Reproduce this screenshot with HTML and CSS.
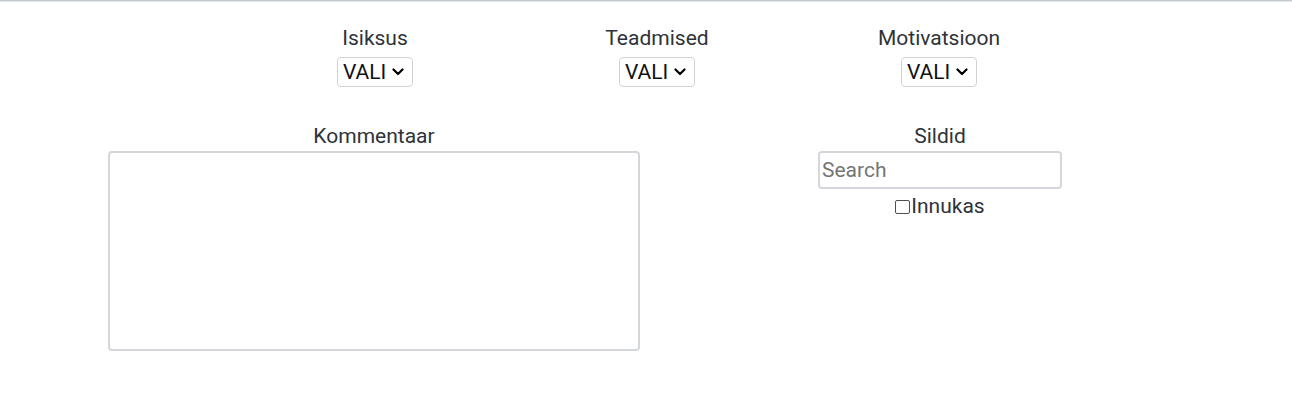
FILE: index.html
```html
<!DOCTYPE html>
<html lang="et">
<head>
<meta charset="utf-8">
<title>Hinnang</title>
<link rel="stylesheet" href="styles.css">
</head>
<body>
<div class="topline"></div>
<div class="row-selects">
  <div class="field f1">
    <label class="lbl">Isiksus</label>
    <select class="sel"><option>VALI</option></select>
  </div>
  <div class="field f2">
    <label class="lbl">Teadmised</label>
    <select class="sel"><option>VALI</option></select>
  </div>
  <div class="field f3">
    <label class="lbl">Motivatsioon</label>
    <select class="sel"><option>VALI</option></select>
  </div>
</div>
<div class="row-second">
  <div class="comment">
    <label class="lbl">Kommentaar</label>
    <textarea class="ta"></textarea>
  </div>
  <div class="tags">
    <label class="lbl">Sildid</label>
    <input class="search" type="text" placeholder="Search">
    <label class="chk"><input type="checkbox" class="cb">Innukas</label>
  </div>
</div>
</body>
</html>
```
FILE: styles.css
```css
* { box-sizing: border-box; }
html, body { margin: 0; padding: 0; background: #fff; }
body {
  font-family: Roboto, "Liberation Sans", sans-serif;
  font-size: 21px;
  line-height: 31px;
  color: #2e3338;
  width: 1292px;
  height: 406px;
  overflow: hidden;
}
.topline {
  height: 2px;
  border-top: 1px solid #c4c9ce;
  border-bottom: 1px solid #e3e6e9;
}
.row-selects {
  display: flex;
  padding-top: 21px;
  padding-left: 275px;
}
.field {
  width: 200px;
  display: flex;
  flex-direction: column;
  align-items: center;
}
.f2 { margin-left: 82px; }
.f3 { margin-left: 82px; }
.lbl { display: block; white-space: nowrap; }
.sel {
  -webkit-appearance: none;
  appearance: none;
  margin-top: 3px;
  height: 30px;
  width: 76px;
  padding: 0 22px 0 5px;
  font-family: Roboto, "Liberation Sans", sans-serif;
  font-size: 21px;
  color: #111;
  border: 1.5px solid #cfd3d7;
  border-radius: 4px;
  background-color: #fff;
  background-image: url("data:image/svg+xml;utf8,<svg xmlns='http://www.w3.org/2000/svg' width='12' height='8' viewBox='0 0 12 8'><path d='M1.5 1.5 L6 6 L10.5 1.5' fill='none' stroke='black' stroke-width='2.2' stroke-linecap='round' stroke-linejoin='round'/></svg>");
  background-repeat: no-repeat;
  background-position: right 8px center;
}
.row-second {
  display: flex;
  padding-left: 108px;
  margin-top: 34px;
}
.comment {
  width: 532px;
  display: flex;
  flex-direction: column;
  align-items: center;
}
.ta {
  margin-top: -1px;
  width: 532px;
  height: 200px;
  border: 2px solid #d3d6da;
  border-radius: 4px;
  resize: none;
  font-family: Roboto, "Liberation Sans", sans-serif;
}
.tags {
  margin-left: 178px;
  width: 244px;
  display: flex;
  flex-direction: column;
  align-items: center;
}
.search {
  margin-top: -1px;
  width: 244px;
  height: 38px;
  border: 2px solid #d3d6da;
  border-radius: 4px;
  padding: 0 2px;
  font-family: Roboto, "Liberation Sans", sans-serif;
  font-size: 21px;
  color: #000;
}
.search::placeholder { color: #757575; }
.chk {
  display: flex;
  align-items: center;
  white-space: nowrap;
  margin-top: 2px;
}
.cb {
  -webkit-appearance: none;
  appearance: none;
  margin: 0 1px 0 0;
  width: 15px;
  height: 14px;
  border: 1.5px solid #4f4f4f;
  border-radius: 2px;
  background: #fff;
}
```
